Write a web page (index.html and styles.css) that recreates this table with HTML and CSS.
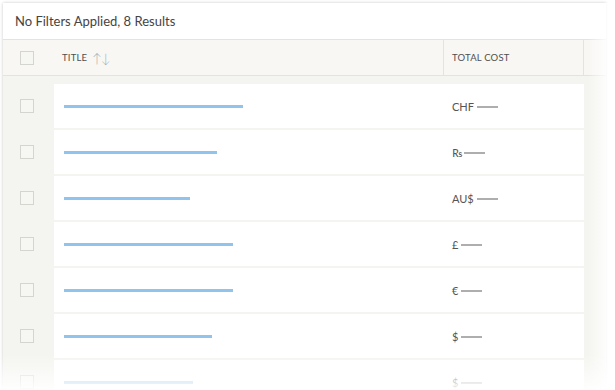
FILE: index.html
```html
<!DOCTYPE html>
<html lang="en">
<head>
	<meta charset="UTF-8">
	<title>Results</title>
	<link rel="stylesheet" href="styles.css">
</head>
<body>
	<div class="panel">
		<div class="summary">No Filters Applied, 8 Results</div>

		<div class="grid head">
			<div class="check-cell"><span class="box"></span></div>
			<div class="cell title-head">Title <span class="sort">&uarr;&darr;</span></div>
			<div class="cell cost-head">Total Cost</div>
			<div class="cell rest"></div>
		</div>

		<div class="rows">
			<div class="grid row">
				<div class="check-cell"><span class="box"></span></div>
				<div class="cell"><span class="bar" style="width:179px"></span></div>
				<div class="cell cost">CHF<span class="dash"></span></div>
				<div class="rest"></div>
			</div>
			<div class="grid row">
				<div class="check-cell"><span class="box"></span></div>
				<div class="cell"><span class="bar" style="width:153px"></span></div>
				<div class="cell cost"><span class="rs">&#8360;</span><span class="dash"></span></div>
				<div class="rest"></div>
			</div>
			<div class="grid row">
				<div class="check-cell"><span class="box"></span></div>
				<div class="cell"><span class="bar" style="width:126px"></span></div>
				<div class="cell cost">AU$<span class="dash"></span></div>
				<div class="rest"></div>
			</div>
			<div class="grid row">
				<div class="check-cell"><span class="box"></span></div>
				<div class="cell"><span class="bar" style="width:169px"></span></div>
				<div class="cell cost">&pound;<span class="dash"></span></div>
				<div class="rest"></div>
			</div>
			<div class="grid row">
				<div class="check-cell"><span class="box"></span></div>
				<div class="cell"><span class="bar" style="width:169px"></span></div>
				<div class="cell cost">&euro;<span class="dash"></span></div>
				<div class="rest"></div>
			</div>
			<div class="grid row">
				<div class="check-cell"><span class="box"></span></div>
				<div class="cell"><span class="bar" style="width:148px"></span></div>
				<div class="cell cost">$<span class="dash"></span></div>
				<div class="rest"></div>
			</div>
			<div class="grid row">
				<div class="check-cell"><span class="box"></span></div>
				<div class="cell"><span class="bar" style="width:129px"></span></div>
				<div class="cell cost">$<span class="dash"></span></div>
				<div class="rest"></div>
			</div>
		</div>

		<!-- soft edges over the list -->
		<div class="fade-right"></div>
	</div>
	<div class="fade-bottom"></div>
</body>
</html>
```

FILE: styles.css
```css
html,body{margin:0;padding:0;}
body{
	width:615px;
	height:390px;
	overflow:hidden;
	background:#fff;
	font-family:"Lato","Open Sans",sans-serif;
	color:#4a4a4a;
	position:relative;
}
.panel{
	position:relative;
	margin:3px 0 0 3px;
	width:603px;
	background:#f4f4f0;
	box-shadow:0 0 3px rgba(0,0,0,0.22);
}
.summary{
	height:36px;
	background:#fff;
	padding-left:12px;
	display:flex;
	align-items:center;
	font-size:13px;
	color:#444;
	border-bottom:1px solid #e4e3de;
}
.grid{
	display:grid;
	grid-template-columns:51px 390px 140px 1fr;
}
.head{
	height:35px;
	background:#f8f7f4;
	border-bottom:1px solid #e4e3de;
}
.head .cell{
	display:flex;
	align-items:center;
	border-right:1px solid #e4e3de;
	font-size:9.5px;
	text-transform:uppercase;
	color:#505050;
	letter-spacing:0.2px;
}
.head .rest{border-right:none;}
.title-head{padding-left:8px;}
.cost-head{padding-left:8px;}
.sort{
	font-size:13px;
	color:#a8a8a8;
	margin-left:5px;
	letter-spacing:-1px;
	font-weight:300;
}
.check-cell{
	display:flex;
	align-items:center;
	padding-left:17px;
}
.box{
	display:block;
	width:12px;
	height:12px;
	border:1px solid #d5d5d0;
	background:#f6f6f3;
}
.rows{
	padding-top:8px;
	display:flex;
	flex-direction:column;
	gap:2px;
}
.row{height:44px;}
.row .cell{
	background:#fff;
	display:flex;
	align-items:center;
}
.row .cell:nth-child(2){padding-left:10px;}
.bar{
	display:block;
	height:3px;
	background:#90c4ec;
}
.cost{
	padding-left:8px;
	font-size:11px;
	color:#555;
}
.rs{font-size:11px;letter-spacing:-1px;}
.dash{
	display:block;
	flex:none;
	width:21px;
	height:0;
	border-top:2px solid #aeaeae;
	margin:1px 0 0 3px;
}
.fade-right{
	position:absolute;
	top:0;
	right:-12px;
	width:30px;
	height:100%;
	background:linear-gradient(to right,rgba(255,255,255,0),#fff 75%);
}
.fade-bottom{
	position:absolute;
	left:0;
	bottom:0;
	width:100%;
	height:36px;
	background:linear-gradient(to bottom,rgba(255,255,255,0),rgba(255,255,255,0.95));
}
```
